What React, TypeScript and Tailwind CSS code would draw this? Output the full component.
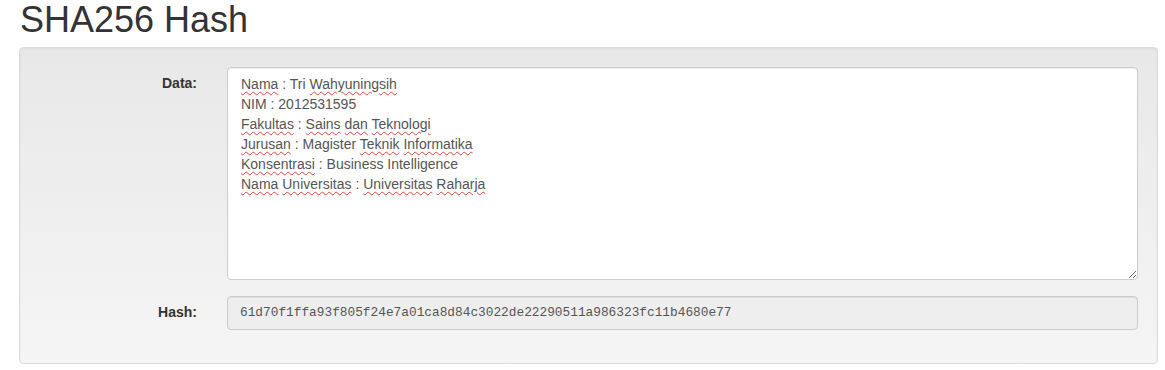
import React from 'react';

const lines: [string, boolean][][] = [
  [['Nama', true], [' : Tri ', false], ['Wahyuningsih', true]],
  [['NIM : 2012531595', false]],
  [['Fakultas', true], [' : ', false], ['Sains', true], [' ', false], ['dan', true], [' ', false], ['Teknologi', true]],
  [['Jurusan', true], [' : Magister ', false], ['Teknik', true], [' ', false], ['Informatika', true]],
  [['Konsentrasi', true], [' : Business Intelligence', false]],
  [['Nama', true], [' ', false], ['Universitas', true], [' : ', false], ['Universitas', true], [' ', false], ['Raharja', true]],
];

const hash = '61d70f1ffa93f805f24e7a01ca8d84c3022de22290511a986323fc11b4680e77';

export default function App() {
  return (
    <div className="min-h-screen bg-white pl-[19px] pr-[7px] text-[#333]" style={{ fontFamily: '"Liberation Sans", Arial, sans-serif' }}>
      <h1 className="h-[47px] pl-[1px] text-[36px] leading-[1.1] font-normal text-[#333]">SHA256 Hash</h1>

      <div className="rounded-[4px] border border-[#dcdcdc] bg-gradient-to-b from-[#e8e8e8] to-[#f5f5f5] px-[19px] pt-[19px] pb-[33px] shadow-[inset_0_1px_3px_rgba(0,0,0,0.05)]">
        {/* Data row */}
        <div className="flex gap-[30px]">
          <label className="w-[158px] shrink-0 pt-[6px] text-right text-[14px] leading-[20px] font-bold text-[#333]">Data:</label>
          <div className="h-[213px] flex-1 resize overflow-auto rounded-[4px] border border-[#ccc] bg-white pl-[13px] pr-[12px] py-[6px] text-[14px] leading-[20px] text-[#555] shadow-[inset_0_1px_1px_rgba(0,0,0,0.075)]">
            {lines.map((line, i) => (
              <div key={i}>
                {line.map(([text, wavy], j) => (
                  <span
                    key={j}
                    className={wavy ? 'underline decoration-wavy decoration-[#e0463f] decoration-1 underline-offset-[2px]' : ''}
                  >
                    {text}
                  </span>
                ))}
              </div>
            ))}
          </div>
        </div>

        {/* Hash row */}
        <div className="mt-[16px] flex gap-[30px]">
          <label className="w-[158px] shrink-0 pt-[6px] text-right text-[14px] leading-[20px] font-bold text-[#333]">Hash:</label>
          <div
            className="flex h-[34px] flex-1 items-center rounded-[4px] border border-[#ccc] bg-[#eee] px-[12px] text-[12.8px] text-[#555] shadow-[inset_0_1px_1px_rgba(0,0,0,0.075)]"
            style={{ fontFamily: '"Liberation Mono", "DejaVu Sans Mono", monospace' }}
          >
            {hash}
          </div>
        </div>
      </div>
    </div>
  );
}
